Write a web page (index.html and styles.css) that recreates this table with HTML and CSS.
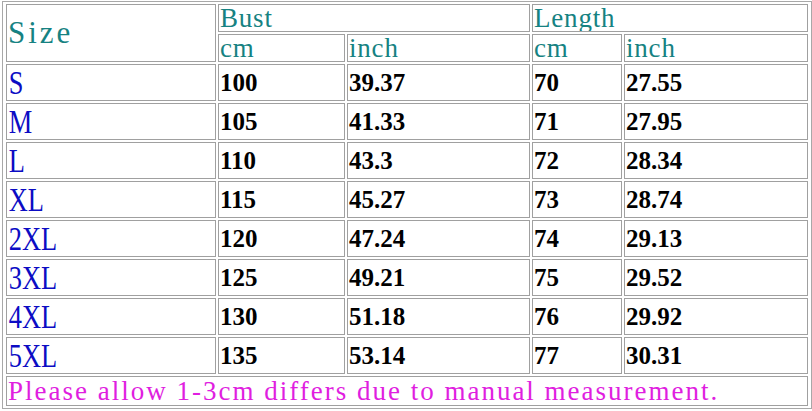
FILE: index.html
```html
<!DOCTYPE html>
<html>
<head>
<meta charset="utf-8">
<title>Size chart</title>
<link rel="stylesheet" href="styles.css">
</head>
<body>
<table class="size-table">
  <colgroup>
    <col class="c-size">
    <col class="c-bcm">
    <col class="c-binch">
    <col class="c-lcm">
    <col class="c-linch">
  </colgroup>
  <tr class="r-head">
    <td rowspan="2" class="hd hd-size">Size</td>
    <td colspan="2" class="hd">Bust</td>
    <td colspan="2" class="hd">Length</td>
  </tr>
  <tr class="r-head">
    <td class="hd">cm</td>
    <td class="hd">inch</td>
    <td class="hd">cm</td>
    <td class="hd">inch</td>
  </tr>
  <tr class="r-data"><td class="sz"><span class="sz-t">S</span></td><td class="num">100</td><td class="num">39.37</td><td class="num">70</td><td class="num">27.55</td></tr>
  <tr class="r-data"><td class="sz"><span class="sz-t">M</span></td><td class="num">105</td><td class="num">41.33</td><td class="num">71</td><td class="num">27.95</td></tr>
  <tr class="r-data"><td class="sz"><span class="sz-t">L</span></td><td class="num">110</td><td class="num">43.3</td><td class="num">72</td><td class="num">28.34</td></tr>
  <tr class="r-data"><td class="sz"><span class="sz-t">XL</span></td><td class="num">115</td><td class="num">45.27</td><td class="num">73</td><td class="num">28.74</td></tr>
  <tr class="r-data"><td class="sz"><span class="sz-t">2XL</span></td><td class="num">120</td><td class="num">47.24</td><td class="num">74</td><td class="num">29.13</td></tr>
  <tr class="r-data"><td class="sz"><span class="sz-t">3XL</span></td><td class="num">125</td><td class="num">49.21</td><td class="num">75</td><td class="num">29.52</td></tr>
  <tr class="r-data"><td class="sz"><span class="sz-t">4XL</span></td><td class="num">130</td><td class="num">51.18</td><td class="num">76</td><td class="num">29.92</td></tr>
  <tr class="r-data"><td class="sz"><span class="sz-t">5XL</span></td><td class="num">135</td><td class="num">53.14</td><td class="num">77</td><td class="num">30.31</td></tr>
  <tr class="r-note"><td colspan="5" class="note">Please allow 1-3cm differs due to manual measurement.</td></tr>
</table>
</body>
</html>
```
FILE: styles.css
```css
* { box-sizing: border-box; }

html, body {
  margin: 0;
  padding: 0;
  background: #ffffff;
}

.size-table {
  margin: 1px 0 0 2px;
  border: 1px solid #a8a8a8;
  padding: 0 1px;
  border-collapse: separate;
  border-spacing: 2px;
  table-layout: fixed;
  width: 810px;
}

.c-size { width: 210px; }
.c-bcm { width: 127px; }
.c-binch { width: 183px; }
.c-lcm { width: 90px; }
.c-linch { width: 184px; }

.size-table td {
  border: 1px solid #a0a0a0;
  padding: 0 1px;
  vertical-align: middle;
  white-space: nowrap;
  overflow: hidden;
}

.r-head { height: 28px; }
.r-data { height: 37px; }
.r-note { height: 30px; }

.hd {
  font-family: "Liberation Serif", serif;
  font-size: 27px;
  letter-spacing: 0.8px;
  line-height: 22px;
  color: #168282;
  padding-left: 2px;
}

.hd-size {
  font-size: 31px;
  letter-spacing: 3px;
  line-height: 30px;
  padding-left: 2px;
}

.sz {
  line-height: 1;
}

.sz-t {
  display: inline-block;
  font-family: "Liberation Serif", serif;
  font-size: 33px;
  line-height: 30px;
  color: #0c0cc4;
  transform: scaleX(0.8);
  transform-origin: left center;
  padding-left: 1px;
}

.num {
  font-family: "Liberation Serif", serif;
  font-weight: bold;
  font-size: 25px;
  line-height: 26px;
  color: #000000;
  padding-left: 2px;
}

.note {
  font-family: "Liberation Serif", serif;
  font-size: 27px;
  letter-spacing: 2px;
  line-height: 24px;
  color: #e01ee0;
  padding-left: 2px;
}
```
